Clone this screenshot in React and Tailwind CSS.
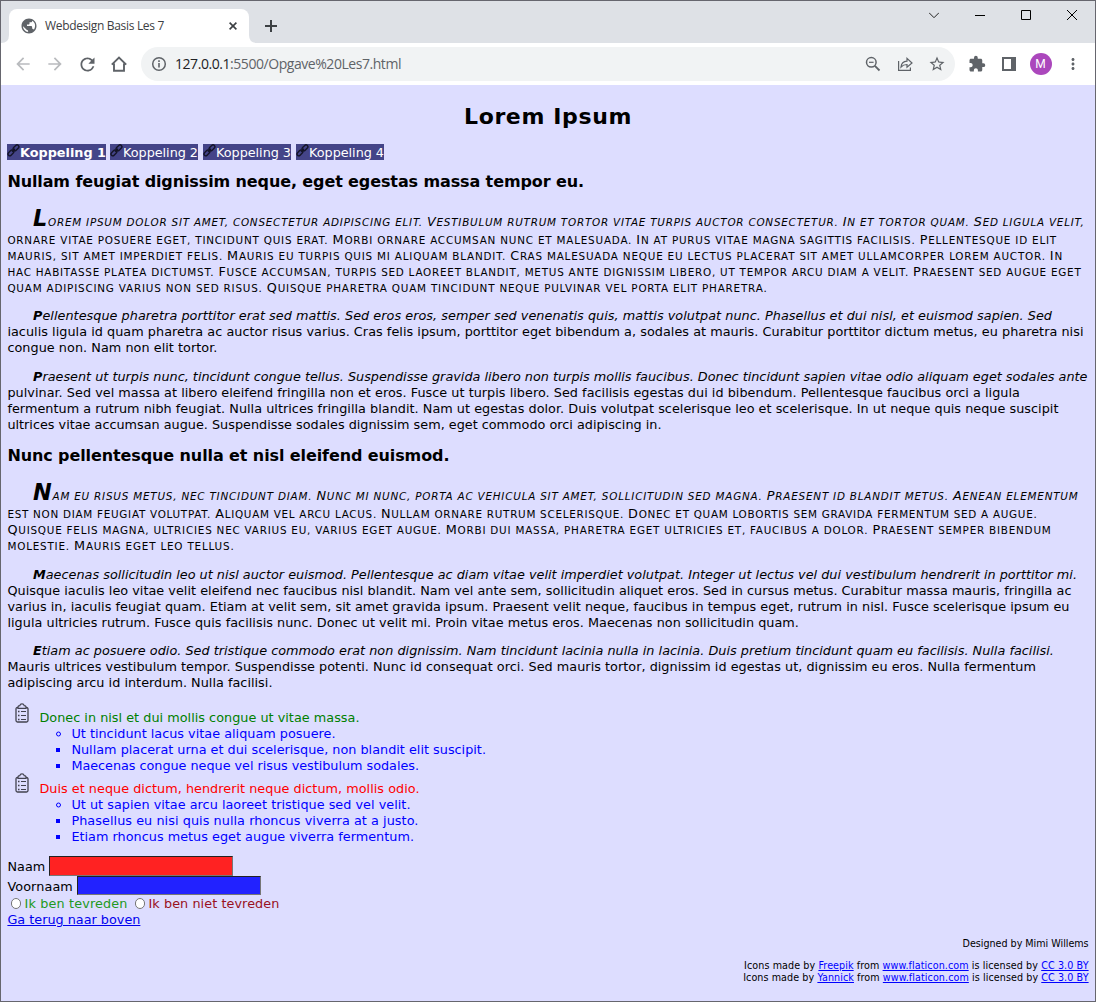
import React, { useLayoutEffect, useRef } from "react";

/* Spreads a run of text over a fixed measure by adjusting its tracking. */
function Fit({ w, children, className = "" }) {
  const ref = useRef(null);
  useLayoutEffect(() => {
    const el = ref.current;
    el.style.letterSpacing = "0px";
    const natural = el.getBoundingClientRect().width;
    el.style.letterSpacing = (w - natural) / el.textContent.length + "px";
  }, [w]);
  return (
    <span ref={ref} className={"inline-block whitespace-pre " + className}>
      {children}
    </span>
  );
}

const paragraphs = {
  p1: [
    ["Lorem ipsum dolor sit amet, consectetur adipiscing elit. Vestibulum rutrum tortor vitae turpis auctor consectetur. In et tortor quam. Sed ligula velit,", 1084.5],
    ["ornare vitae posuere eget, tincidunt quis erat. Morbi ornare accumsan nunc et malesuada. In at purus vitae magna sagittis facilisis. Pellentesque id elit", 1057],
    ["mauris, sit amet imperdiet felis. Mauris eu turpis quis mi aliquam blandit. Cras malesuada neque eu lectus placerat sit amet ullamcorper lorem auctor. In", 1063],
    ["hac habitasse platea dictumst. Fusce accumsan, turpis sed laoreet blandit, metus ante dignissim libero, ut tempor arcu diam a velit. Praesent sed augue eget", 1081.5],
    ["quam adipiscing varius non sed risus. Quisque pharetra quam tincidunt neque pulvinar vel porta elit pharetra.", 767.5],
  ],
  p2: [
    ["Pellentesque pharetra porttitor erat sed mattis. Sed eros eros, semper sed venenatis quis, mattis volutpat nunc. Phasellus et dui nisl, et euismod sapien. Sed", 1052],
    ["iaculis ligula id quam pharetra ac auctor risus varius. Cras felis ipsum, porttitor eget bibendum a, sodales at mauris. Curabitur porttitor dictum metus, eu pharetra nisi", 1083.5],
    ["congue non. Nam non elit tortor.", 217.5],
  ],
  p3: [
    ["Praesent ut turpis nunc, tincidunt congue tellus. Suspendisse gravida libero non turpis mollis faucibus. Donec tincidunt sapien vitae odio aliquam eget sodales ante", 1087.5],
    ["pulvinar. Sed vel massa at libero eleifend fringilla non et eros. Fusce ut turpis libero. Sed facilisis egestas dui id bibendum. Pellentesque faucibus orci a ligula", 1020],
    ["fermentum a rutrum nibh feugiat. Nulla ultrices fringilla blandit. Nam ut egestas dolor. Duis volutpat scelerisque leo et scelerisque. In ut neque quis neque suscipit", 1058.5],
    ["ultrices vitae accumsan augue. Suspendisse sodales dignissim sem, eget commodo orci adipiscing in.", 661.5],
  ],
  p4: [
    ["Nam eu risus metus, nec tincidunt diam. Nunc mi nunc, porta ac vehicula sit amet, sollicitudin sed magna. Praesent id blandit metus. Aenean elementum", 1078.5],
    ["est non diam feugiat volutpat. Aliquam vel arcu lacus. Nullam ornare rutrum scelerisque. Donec et quam lobortis sem gravida fermentum sed a augue.", 1037.5],
    ["Quisque felis magna, ultricies nec varius eu, varius eget augue. Morbi dui massa, pharetra eget ultricies et, faucibus a dolor. Praesent semper bibendum", 1051.5],
    ["molestie. Mauris eget leo tellus.", 234.5],
  ],
  p5: [
    ["Maecenas sollicitudin leo ut nisl auctor euismod. Pellentesque ac diam vitae velit imperdiet volutpat. Integer ut lectus vel dui vestibulum hendrerit in porttitor mi.", 1077],
    ["Quisque iaculis leo vitae velit eleifend nec faucibus nisl blandit. Nam vel ante sem, sollicitudin aliquet eros. Sed in cursus metus. Curabitur massa mauris, fringilla ac", 1071.5],
    ["varius in, iaculis feugiat quam. Etiam at velit sem, sit amet gravida ipsum. Praesent velit neque, faucibus in tempus eget, rutrum in nisl. Fusce scelerisque ipsum eu", 1069.5],
    ["ligula ultricies rutrum. Fusce quis facilisis nunc. Donec ut velit mi. Proin vitae metus eros. Maecenas non sollicitudin quam.", 799],
  ],
  p6: [
    ["Etiam ac posuere odio. Sed tristique commodo erat non dignissim. Nam tincidunt lacinia nulla in lacinia. Duis pretium tincidunt quam eu facilisis. Nulla facilisi.", 1054],
    ["Mauris ultrices vestibulum tempor. Suspendisse potenti. Nunc id consequat orci. Sed mauris tortor, dignissim id egestas ut, dignissim eu eros. Nulla fermentum", 1036],
    ["adipiscing arcu id interdum. Nulla facilisi.", 272.5],
  ],
};

/* Small capitals: lower-case runs become reduced capitals. */
function SmallCaps({ text }) {
  return text.match(/[A-Z]|[^A-Z]+/g).map((run, i) =>
    /[A-Z]/.test(run) ? (
      run
    ) : (
      <span key={i} className="text-[10.4px] uppercase">
        {run}
      </span>
    )
  );
}

function Paragraph({ lines, lead = false, className = "" }) {
  return (
    <p className={className}>
      {lines.map(([text, end], i) =>
        i === 0 ? (
          <span key={i} className={"block pl-[25.6px] italic " + (lead ? "h-[26px]" : "h-4")}>
            <Fit w={end - 33}>
              <span className={"font-bold " + (lead ? "text-[22.4px] leading-6" : "")}>{text[0]}</span>
              {lead ? <SmallCaps text={text.slice(1)} /> : text.slice(1)}
            </Fit>
          </span>
        ) : (
          <span key={i} className="block h-4">
            <Fit w={end - 7.4}>{lead ? <SmallCaps text={text} /> : text}</Fit>
          </span>
        )
      )}
    </p>
  );
}

function ChainIcon() {
  return (
    <svg className="h-[13px] w-[13px] shrink-0" viewBox="0 0 13 13" fill="none" stroke="#141428" strokeWidth="1.4">
      <rect x="-3.3" y="-1.8" width="6.6" height="3.6" rx="1.8" transform="translate(3.9 8.9) rotate(-45)" />
      <rect x="-3.3" y="-1.8" width="6.6" height="3.6" rx="1.8" transform="translate(9 3.8) rotate(-45)" />
      <path d="M5 7.8 8 4.8" />
    </svg>
  );
}

function ClipboardIcon() {
  return (
    <svg className="h-5 w-[14px]" viewBox="0 0 14 20" fill="none" stroke="#42424f">
      <path d="M3 4.500h-.500q-1.500 0-1.500 1.500v11.500q0 1.500 1.500 1.500h9q1.500 0 1.500-1.500v-11.500q0-1.500-1.500-1.500h-.500" strokeWidth="1.300" />
      <path d="M3 5.300v-1.300q0-1.200 1.800-1.300Q5.200.8 7 .8t2.200 1.900q1.800.1 1.800 1.300v1.300z" strokeWidth="1.200" />
      <path d="M6 8.500h5M6 12.500h5M6 16.500h5" strokeWidth="1" />
      <path d="M3 8.500h1.500M3 12.500h1.500M3 16.500h1.500" strokeWidth="1.600" />
    </svg>
  );
}

function Links({ items }) {
  return (
    <ul className="pl-16 text-[#0000ff]">
      {items.map(([text, end], i) => (
        <li key={i} className="flex h-4">
          <span className="-ml-4 flex w-4 shrink-0 items-start">
            {i === 0 ? (
              <svg className="mt-[5px] ml-[0.600px] h-[6px] w-[6px]" viewBox="0 0 6 6" fill="none" stroke="#0000ff">
                <circle cx="2.500" cy="3" r="2" />
              </svg>
            ) : (
              <span className="mt-[6px] ml-[0.600px] h-1 w-1 bg-[#0000ff]" />
            )}
          </span>
          <Fit w={end - 71.4}>{text}</Fit>
        </li>
      ))}
    </ul>
  );
}

function ListGroup({ title, end, color, items, iconClass, className = "" }) {
  return (
    <li className={className}>
      <div className={"flex h-4 " + color}>
        <span className={"ml-[8px] w-6 shrink-0 " + iconClass}>
          <ClipboardIcon />
        </span>
        <Fit w={end - 39.4}>{title}</Fit>
      </div>
      <Links items={items} />
    </li>
  );
}

function NavItem({ w, text, active }) {
  return (
    <a className={"flex h-4 bg-[#444488] leading-[18px] text-white " + (active ? "font-bold" : "")}>
      <ChainIcon />
      <Fit w={w - 13}>{text}</Fit>
    </a>
  );
}

function Credit({ name, w }) {
  return (
    <div className="h-3">
      <Fit w={w}>
        Icons made by <a className="text-[#0000ff] underline">{name}</a> from{" "}
        <a className="text-[#0000ff] underline">www.flaticon.com</a> is licensed by{" "}
        <a className="text-[#0000ff] underline">CC 3.0 BY</a>
      </Fit>
    </div>
  );
}

function Icon({ d, className = "", size = "h-[18px] w-[18px]", fill = "#5f6368" }) {
  return (
    <svg viewBox="0 0 24 24" className={size + " shrink-0 " + className} fill={fill}>
      <path d={d} />
    </svg>
  );
}

function TabBar() {
  return (
    <div className="flex h-[42px] bg-[#dee1e6]">
      <svg className="mt-[34px] h-2 w-2 shrink-0" viewBox="0 0 8 8">
        <path d="M0 8h8V0q0 8-8 8" fill="#fff" />
      </svg>
      <div className="mt-2 flex h-[34px] w-[240px] items-center rounded-t-lg bg-white">
        <Icon
          className="ml-[11px]"
          d="M12 2C6.480 2 2 6.480 2 12s4.480 10 10 10 10-4.480 10-10S17.520 2 12 2zM4 12.200l4.500 4.300c.5.500 1 .8 1.700.7l.8 2.700C7.200 19.400 4 16.200 4 12.200zM18.500 17c-.5-1-1.200-1.300-2.300-1.300v-2c0-1-.7-1.600-1.700-1.600H9.300V10h2c.8 0 1.400-.6 1.400-1.400V7h1.800c1 0 1.700-.8 1.700-1.700V5c4.500 2.300 5 8 2.300 12z"
        />
        <div className="ml-[7px] w-[184px] font-['Open_Sans',sans-serif] text-[12px] leading-4 text-[#3c4043]">
          <Fit w={119}>Webdesign Basis Les 7</Fit>
        </div>
        <svg className="h-2 w-2 shrink-0" viewBox="0 0 8 8" stroke="#3c4043" strokeWidth="1.600">
          <path d="M.6.6l6.800 6.800M7.400.6.6 7.400" />
        </svg>
      </div>
      <svg className="mt-[34px] h-2 w-2 shrink-0" viewBox="0 0 8 8">
        <path d="M8 8H0V0q0 8 8 8" fill="#fff" />
      </svg>
      <svg className="mt-[19px] ml-2 h-3 w-3" viewBox="0 0 12 12" stroke="#3c4043" strokeWidth="2">
        <path d="M6 0v12M0 6h12" />
      </svg>
      <div className="mt-[9px] mr-[18px] ml-auto flex h-[10px] items-start gap-9">
        <svg className="h-[10px] w-[10px]" viewBox="0 0 10 10" fill="none" stroke="#222">
          <path d="M0 2.700l5 5 5-5" />
        </svg>
        <svg className="h-[10px] w-[10px]" viewBox="0 0 10 10" stroke="#000">
          <path d="M0 5.500h10" />
        </svg>
        <svg className="h-[10px] w-[10px]" viewBox="0 0 10 10" fill="none" stroke="#000">
          <path d="M.5.5h9v9h-9z" />
        </svg>
        <svg className="h-[10px] w-[10px]" viewBox="0 0 10 10" stroke="#000">
          <path d="M0 0l10 10M10 0 0 10" />
        </svg>
      </div>
    </div>
  );
}

function Toolbar() {
  return (
    <div className="flex h-[42px] items-center bg-white pl-3">
      <Icon size="h-5 w-5" fill="#b9bbbe" d="M20 11H7.830l5.590-5.590L12 4l-8 8 8 8 1.410-1.410L7.830 13H20z" />
      <Icon size="h-5 w-5" className="ml-3" fill="#b9bbbe" d="m12 4-1.410 1.410L16.170 11H4v2h12.170l-5.580 5.590L12 20l8-8z" />
      <Icon size="h-[21px] w-[21px]" className="ml-[11.500px]" d="M17.650 6.350A7.958 7.958 0 0 0 12 4c-4.420 0-7.990 3.580-7.990 8s3.570 8 7.990 8c3.730 0 6.840-2.550 7.730-6h-2.080A5.990 5.990 0 0 1 12 18c-3.310 0-6-2.690-6-6s2.690-6 6-6c1.660 0 3.140.690 4.220 1.780L13 11h7V4z" />
      <svg className="ml-[11.500px] h-5 w-5 shrink-0" viewBox="0 0 20 20" fill="none" stroke="#5f6368" strokeWidth="1.900">
        <path d="M2.800 10.700 10 3.500l7.200 7.200M5 9.500v7.300h10V9.500" />
      </svg>
      <div className="ml-[11.500px] flex h-[34px] w-[814px] items-center rounded-full bg-[#f1f3f4]">
        <svg className="ml-[10px] h-4 w-4 shrink-0" viewBox="0 0 16 16" fill="none" stroke="#5f6368" strokeWidth="1.500">
          <circle cx="8" cy="8" r="6.300" />
          <path d="M8 7v4.500M8 4.300v1.600" strokeWidth="1.600" />
        </svg>
        <div className="ml-[8.500px] font-['Open_Sans',sans-serif] text-[14px] leading-5 text-[#5f6368]">
          <Fit w={226}>
            <span className="text-[#202124]">127.0.0.1</span>:5500/Opgave%20Les7.html
          </Fit>
        </div>
        <div className="mr-[9px] ml-auto flex items-center gap-[14px]">
          <svg className="h-[18px] w-[18px]" viewBox="0 0 18 18" fill="none" stroke="#5f6368" strokeWidth="1.500">
            <circle cx="7.300" cy="7.300" r="4.800" />
            <path d="M5 7.300h4.600" strokeWidth="1.200" />
            <path d="m10.900 10.900 4.600 4.600" strokeWidth="1.800" />
          </svg>
          <svg className="h-[18px] w-[18px]" viewBox="0 0 18 18" fill="none" stroke="#5f6368" strokeWidth="1.200">
            <path d="M2.600 6v9.400h11.800v-2.800" />
            <path d="M5 12c.4-4 2.800-5.600 6-5.800V3.300L16 8l-5 4.300V9.500c-2.600 0-4.300.6-6 2.500z" />
          </svg>
          <Icon d="m22 9.240-7.190-.620L12 2 9.190 8.630 2 9.240l5.460 4.730L5.820 21 12 17.270 18.180 21l-1.630-7.030zM12 15.400l-3.760 2.270 1-4.280-3.320-2.880 4.380-.380L12 6.100l1.710 4.040 4.380.380-3.320 2.880 1 4.280z" />
        </div>
      </div>
      <Icon className="ml-[13px]" d="M20.500 11H19V7c0-1.100-.9-2-2-2h-4V3.500a2.500 2.500 0 0 0-5 0V5H4c-1.100 0-1.990.9-1.990 2v3.800H3.500c1.490 0 2.700 1.210 2.700 2.700s-1.210 2.700-2.700 2.700H2V20c0 1.100.9 2 2 2h3.800v-1.500c0-1.490 1.210-2.700 2.700-2.700s2.700 1.210 2.700 2.700V22H17c1.100 0 2-.9 2-2v-4h1.500a2.500 2.500 0 0 0 0-5z" />
      <svg className="ml-4 h-[14px] w-[14px] shrink-0" viewBox="0 0 14 14">
        <path d="M0 0h14v14H0zM2 2v10h7V2z" fill="#5f6368" fillRule="evenodd" />
      </svg>
      <div className="ml-[14px] flex h-[22px] w-[22px] items-center justify-center rounded-full bg-[#ab47bc] font-[Roboto,sans-serif] text-[12px] text-white">
        M
      </div>
      <Icon className="ml-[12.500px]" d="M12 8c1.100 0 2-.9 2-2s-.9-2-2-2-2 .9-2 2 .9 2 2 2zm0 2c-1.100 0-2 .9-2 2s.9 2 2 2 2-.9 2-2-.9-2-2-2zm0 6c-1.100 0-2 .9-2 2s.9 2 2 2 2-.9 2-2-.9-2-2-2z" />
    </div>
  );
}

function Radio() {
  return <span className="mt-[2px] h-[10.500px] w-[10.500px] shrink-0 rounded-full border border-[#767676] bg-white" />;
}

export default function App() {
  return (
    <div className="flex h-[1002px] w-[1096px] flex-col overflow-hidden border border-[#66666e] bg-[#ddddff] text-black">
      <TabBar />
      <Toolbar />
      <main className="flex flex-col pr-[6.400px] pl-[6.400px] font-['DejaVu_Sans',Verdana,sans-serif] text-[12.800px] leading-4">
        <h1 className="mt-4 h-8 text-center text-[22px] leading-8 font-bold">
          <Fit w={168}>Lorem Ipsum</Fit>
        </h1>
        <nav className="mt-[11px] -ml-[0.400px] flex h-4">
          <NavItem w={99} text="Koppeling 1" active />
          <span className="w-1" />
          <NavItem w={88} text="Koppeling 2" />
          <span className="w-[5px]" />
          <NavItem w={88} text="Koppeling 3" />
          <span className="w-[5px]" />
          <NavItem w={88} text="Koppeling 4" />
        </nav>
        <h2 className="mt-3 h-5 text-[16px] leading-5 font-bold">
          <Fit w={576.5}>Nullam feugiat dignissim neque, eget egestas massa tempor eu.</Fit>
        </h2>
        <Paragraph lead className="mt-[14px]" lines={paragraphs.p1} />
        <Paragraph className="mt-3" lines={paragraphs.p2} />
        <Paragraph className="mt-[13px]" lines={paragraphs.p3} />
        <h2 className="mt-[13px] h-5 text-[16px] leading-5 font-bold">
          <Fit w={442}>Nunc pellentesque nulla et nisl eleifend euismod.</Fit>
        </h2>
        <Paragraph lead className="mt-[14px]" lines={paragraphs.p4} />
        <Paragraph className="mt-[13px]" lines={paragraphs.p5} />
        <Paragraph className="mt-3" lines={paragraphs.p6} />
        <ul className="mt-[19px]">
          <ListGroup
            iconClass="-mt-[7px]"
            title="Donec in nisl et dui mollis congue ut vitae massa."
            end={359.5}
            color="text-[#008000]"
            items={[
              ["Ut tincidunt lacus vitae aliquam posuere.", 335.5],
              ["Nullam placerat urna et dui scelerisque, non blandit elit suscipit.", 486],
              ["Maecenas congue neque vel risus vestibulum sodales.", 419],
            ]}
          />
          <ListGroup
            iconClass="-mt-2"
            className="mt-[7px]"
            title="Duis et neque dictum, hendrerit neque dictum, mollis odio."
            end={419.5}
            color="text-[#ff0000]"
            items={[
              ["Ut ut sapien vitae arcu laoreet tristique sed vel velit.", 410.5],
              ["Phasellus eu nisi quis nulla rhoncus viverra at a justo.", 418.5],
              ["Etiam rhoncus metus eget augue viverra fermentum.", 414],
            ]}
          />
        </ul>
        <form className="mt-[11px]">
          <div className="flex h-5">
            <label className="w-[41.600px] pt-[3px]">
              <Fit w={38}>Naam</Fit>
            </label>
            <input className="h-5 w-[184px] border border-t-[#222] border-r-[#767676] border-b-[#767676] border-l-[#222] bg-[#ff2222] outline-none" />
          </div>
          <div className="flex h-[19px]">
            <label className="w-[69.600px] pt-[3px]">
              <Fit w={65.500}>Voornaam</Fit>
            </label>
            <input className="h-[19px] w-[184px] border border-t-[#222] border-r-[#767676] border-b-[#767676] border-l-[#222] bg-[#2222ff] outline-none" />
          </div>
          <div className="mt-px flex h-4 pl-[3.600px]">
            <Radio />
            <span className="ml-[3.100px] w-[110.400px] text-[#229922]">
              <Fit w={103}>Ik ben tevreden</Fit>
            </span>
            <Radio />
            <span className="ml-[3px] text-[#991122]">
              <Fit w={131}>Ik ben niet tevreden</Fit>
            </span>
          </div>
          <a className="block h-4 text-[#0000ee]">
            <Fit w={133} className="underline">Ga terug naar boven</Fit>
          </a>
        </form>
        <footer className="mt-[10px] text-right text-[9.600px] leading-3">
          <div className="h-3">
            <Fit w={126}>Designed by Mimi Willems</Fit>
          </div>
          <div className="mt-[10px]">
            <Credit name="Freepik" w={344.5} />
            <Credit name="Yannick" w={345.5} />
          </div>
        </footer>
      </main>
    </div>
  );
}
